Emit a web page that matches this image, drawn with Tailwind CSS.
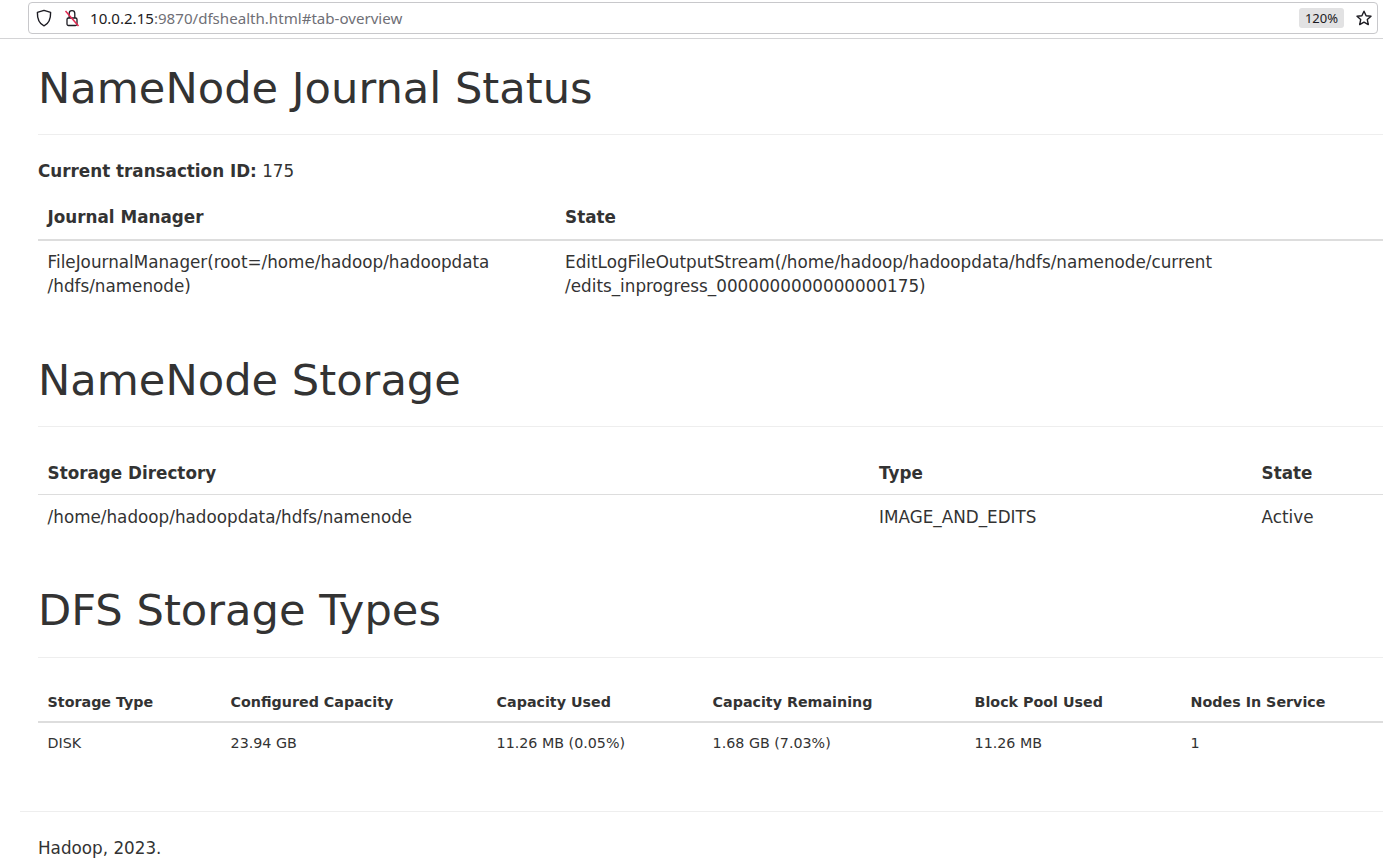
<!DOCTYPE html>
<html lang="en">
<head>
    <meta charset="UTF-8">
    <title>Namenode information</title>
    <script src="https://cdn.jsdelivr.net/npm/@tailwindcss/browser@4"></script>
</head>
<body class="bg-white text-[#333] font-['DejaVu_Sans',sans-serif] text-[16.8px] leading-[24px] overflow-hidden h-[867px]">

    <!-- Browser address bar -->
    <div class="h-[39px] border-b border-[#d4d4d6] pl-[28px] pr-[5px] pt-[2px]">
        <div class="h-[32px] border border-[#c8c8cb] rounded-[4px] flex items-center pl-[7px] pr-[3px] font-['Noto_Sans',sans-serif] text-[15.1px]">
            <svg class="w-[16px] h-[18px] shrink-0" viewBox="0 0 16 18" fill="none" stroke="#1c1b22" stroke-width="1.4"><path d="M8 1.4 L14.6 3.4 C14.8 10 13 14.4 8 16.8 C3 14.4 1.2 10 1.4 3.4 Z" stroke-linejoin="round"/></svg>
            <svg class="w-[16px] h-[18px] ml-[12px] shrink-0" viewBox="0 0 16 18" fill="none" stroke="#1c1b22" stroke-width="1.3"><path d="M5.2 9V4.5a2.8 2.8 0 0 1 5.6 0V9"/><rect x="3" y="9" width="10" height="7.5" rx="1.5"/><path d="M1.5 2 L14.5 17" stroke="#e22850" stroke-width="1.5"/></svg>
            <span class="ml-[10px] text-[#1c1b22]">10.0.2.15<span class="text-[#6f6f76]">:9870/dfshealth.html#tab-overview</span></span>
            <span class="ml-auto bg-[#e2e2e3] rounded-[3px] h-[20px] w-[45px] flex items-center justify-center text-[13px] text-[#1c1b22]">120%</span>
            <svg class="w-[16px] h-[16px] ml-[12px] mr-[2px] shrink-0" viewBox="0 0 16 16" fill="none" stroke="#1c1b22" stroke-width="1.4"><path d="M8 1.2 L10.1 5.7 L15 6.3 L11.3 9.6 L12.3 14.6 L8 12.1 L3.7 14.6 L4.7 9.6 L1 6.3 L5.9 5.7 Z" stroke-linejoin="round"/></svg>
        </div>
    </div>

    <div class="pl-[38px]">
        <!-- Journal status -->
        <div class="pt-[26px] pb-[9px] mb-[24px] border-b border-[#eee]">
            <h1 class="text-[43.2px] leading-[47.5px] mb-[12px]">NameNode Journal Status</h1>
        </div>
        <p class="mb-[13px]"><b>Current transaction ID:</b> 175</p>
        <table class="w-[1345px] table-fixed mb-[24px] text-left">
            <colgroup><col class="w-[517.5px]"><col></colgroup>
            <thead>
                <tr class="border-b-2 border-[#ddd]">
                    <th class="p-[9.6px]">Journal Manager</th>
                    <th class="p-[9.6px]">State</th>
                </tr>
            </thead>
            <tbody>
                <tr class="border-b border-white">
                    <td class="p-[9.6px]">FileJournalManager(root=/home/hadoop/hadoopdata<br>/hdfs/namenode)</td>
                    <td class="p-[9.6px]">EditLogFileOutputStream(/home/hadoop/hadoopdata/hdfs/namenode/current<br>/edits_inprogress_0000000000000000175)</td>
                </tr>
            </tbody>
        </table>

        <!-- Storage -->
        <div class="pt-[24px] pb-[10px] mb-[24px] border-b border-[#eee]">
            <h1 class="text-[43.2px] leading-[47.5px] mb-[12px]">NameNode Storage</h1>
        </div>
        <table class="w-[1345px] table-fixed mb-[24px] text-left">
            <colgroup><col class="w-[831.5px]"><col class="w-[382.5px]"><col></colgroup>
            <thead>
                <tr class="border-b border-[#ddd]">
                    <th class="px-[9.6px] pt-[9.6px] pb-[8.6px]">Storage Directory</th>
                    <th class="px-[9.6px] pt-[9.6px] pb-[8.6px]">Type</th>
                    <th class="px-[9.6px] pt-[9.6px] pb-[8.6px]">State</th>
                </tr>
            </thead>
            <tbody>
                <tr>
                    <td class="px-[9.6px] pt-[10.6px] pb-[9.6px]">/home/hadoop/hadoopdata/hdfs/namenode</td>
                    <td class="px-[9.6px] pt-[10.6px] pb-[9.6px]">IMAGE_AND_EDITS</td>
                    <td class="px-[9.6px] pt-[10.6px] pb-[9.6px]">Active</td>
                </tr>
            </tbody>
        </table>

        <!-- Storage types -->
        <div class="pt-[24px] pb-[11px] mb-[24px] border-b border-[#eee]">
            <h1 class="text-[43.2px] leading-[47.5px] mb-[12px]">DFS Storage Types</h1>
        </div>
        <table class="w-[1345px] table-fixed text-left text-[14.28px] leading-[20px]">
            <colgroup><col class="w-[183px]"><col class="w-[266px]"><col class="w-[216px]"><col class="w-[262px]"><col class="w-[216px]"><col></colgroup>
            <thead>
                <tr class="border-b-2 border-[#ddd]">
                    <th class="p-[9.6px]">Storage Type</th>
                    <th class="p-[9.6px]">Configured Capacity</th>
                    <th class="p-[9.6px]">Capacity Used</th>
                    <th class="p-[9.6px]">Capacity Remaining</th>
                    <th class="p-[9.6px]">Block Pool Used</th>
                    <th class="p-[9.6px]">Nodes In Service</th>
                </tr>
            </thead>
            <tbody>
                <tr>
                    <td class="p-[9.6px]">DISK</td>
                    <td class="p-[9.6px]">23.94 GB</td>
                    <td class="p-[9.6px]">11.26 MB (0.05%)</td>
                    <td class="p-[9.6px]">1.68 GB (7.03%)</td>
                    <td class="p-[9.6px]">11.26 MB</td>
                    <td class="p-[9.6px]">1</td>
                </tr>
            </tbody>
        </table>
    </div>

    <!-- Footer -->
    <div class="ml-[20px] mt-[48px] border-t border-[#eee] pt-[24px] pl-[18px]">
        <p>Hadoop, 2023.</p>
    </div>

</body>
</html>
